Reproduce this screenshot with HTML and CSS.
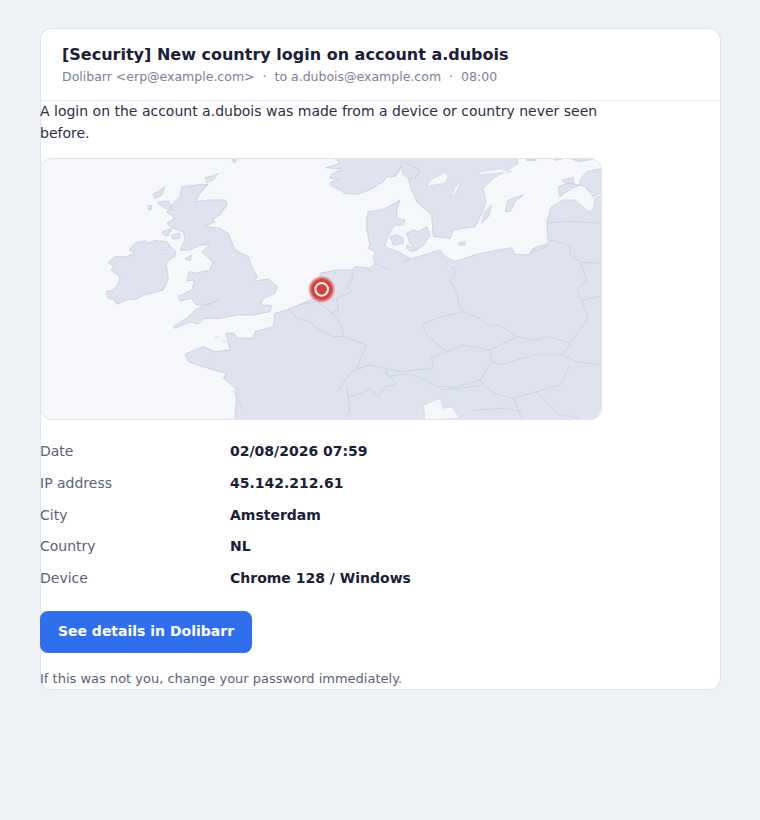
FILE: index.html
```html
<!DOCTYPE html>
<html lang="en">
<head>
<meta charset="utf-8">
<title>New country login</title>
<link rel="stylesheet" href="styles.css">
</head>
<body>
<main class="card">
  <header class="head">
    <h1 class="subject">[Security] New country login on account a.dubois</h1>
    <p class="meta"><span>Dolibarr &lt;erp@example.com&gt;</span><span class="dot">·</span><span>to a.dubois@example.com</span><span class="dot">·</span><span>08:00</span></p>
  </header>
  <p class="intro">A login on the account a.dubois was made from a device or country never seen before.</p>
  <div class="map">
    <svg class="map-svg" viewBox="3 12 1680 780" width="560" height="260" aria-hidden="true">
      <defs>
        <radialGradient id="halo">
          <stop offset="0" stop-color="#d8403a"/>
          <stop offset="0.72" stop-color="#d8403a"/>
          <stop offset="1" stop-color="#d8403a" stop-opacity="0.05"/>
        </radialGradient>
      </defs>
      <g class="land">
        <path d="M205 322L225 305 262 305 285 292 268 285 285 265 315 257 325 265 345 257 380 260 395 280 407 290 405 303 385 317 378 325 385 370 370 405 345 412 310 420 290 432 258 435 230 448 225 435 205 430 198 410 220 405 235 385 240 365 225 355 213 345 222 335Z"/>
        <path d="M425 95L505 87 480 115 465 140 510 135 555 135 562 147 540 180 515 195 525 200 495 215 540 220 565 235 585 285 625 305 635 335 652 365 645 378 685 372 712 395 705 415 670 430 660 450 695 452 690 470 640 480 590 480 540 490 495 490 475 508 450 500 405 520 400 515 440 490 465 465 495 450 535 435 505 450 470 450 455 430 420 438 415 425 455 405 465 375 440 378 447 350 470 355 510 345 518 320 485 290 510 270 480 270 450 285 420 285 435 255 430 230 400 220 380 205 405 190 380 170 395 150 420 125Z"/>
        <path d="M495 68L520 62 535 55 520 75 500 82Z"/>
        <path d="M340 118L375 95 365 120 345 130Z"/>
        <path d="M352 142L385 138 398 165 375 160Z"/>
        <path d="M324 152L335 152 333 165 324 163Z"/>
        <path d="M365 232L395 220 385 242 372 240Z"/>
        <path d="M395 240L420 235 420 250 397 252Z"/>
        <path d="M435 312L455 300 450 317Z"/>
        <path d="M575 14L590 14 584 24Z"/>
        <path d="M435 597L490 575 525 590 570 585 558 535 582 535 590 550 640 550 645 530 700 515 705 475 740 465 780 448 810 435 840 420 840 355 890 345 935 345 945 335 990 340 1005 325 1000 310 1005 290 985 280 990 270 980 220 980 190 985 170 1025 165 1055 150 1080 135 1070 165 1070 190 1095 195 1090 210 1065 210 1045 240 1035 270 1045 280 1075 290 1110 310 1090 320 1135 305 1185 290 1200 285 1215 305 1245 320 1320 295 1415 278 1425 298 1465 300 1480 280 1525 265 1520 200 1535 155 1570 135 1605 135 1645 170 1660 165 1665 130 1690 120 1690 800 585 800 590 705 575 690 550 670 560 655 520 645 445 620Z"/>
        <path d="M850 8L890 12 900 25 870 35 855 38 905 42 875 58 870 70 900 72 875 80 870 90 900 105 915 115 950 118 990 105 1030 80 1040 65 1065 65 1080 45 1083 30 1090 60 1105 70 1115 105 1130 140 1175 180 1180 245 1230 250 1240 225 1305 215 1330 165 1337 140 1330 100 1360 70 1435 25 1430 8Z"/>
        <path d="M1620 75L1640 50 1690 40 1690 110 1660 125 1635 95 1620 90Z"/>
        <path d="M1050 245L1070 240 1090 250 1090 265 1060 270Z"/>
        <path d="M1100 235L1120 225 1135 230 1160 215 1170 240 1150 270 1130 285 1110 265Z"/>
        <path d="M1100 270L1130 285 1115 290 1100 280Z"/>
        <path d="M1395 170L1405 135 1450 120 1425 140 1410 170Z"/>
        <path d="M1325 205L1335 170 1355 150 1345 185Z"/>
        <path d="M1255 265L1275 260 1275 270 1258 270Z"/>
        <path d="M1555 95L1585 85 1620 90 1595 100 1560 125 1555 110Z"/>
        <path d="M1565 75L1600 68 1600 85 1575 85Z"/>
        <path d="M1460 12L1490 15 1460 17Z"/>
        <path d="M1540 12L1565 12 1550 16Z"/>
        <path d="M1595 12L1620 20 1670 10Z"/>
      </g>
      <g class="sea">
        <path d="M362 285h8v10h-8z"/>
        <path d="M1160 95L1170 75 1215 52 1225 65 1215 85 1180 90Z"/>
        <path d="M1232 128L1245 95 1265 78 1250 110Z"/>
        <path d="M1150 750L1200 730 1210 760 1235 755 1260 790 1155 795Z"/>
        <path d="M1315 50L1380 42 1415 50 1370 55 1320 60Z"/>
        <path d="M1220 322l25 5 5 8-28-8z"/>
      </g>
      <g class="borders">
        <path d="M940 345L935 375 920 395 935 410 890 430 895 465 875 475 890 490 905 520 910 545 980 570 950 640 990 630 1080 650 1175 640 1180 620 1170 610 1220 590 1270 570 1350 585 1430 545 1480 555 1530 545 1590 565 1645 490 1625 435 1610 405 1640 375 1620 320 1590 300"/>
        <path d="M1240 335L1245 360 1230 375 1250 410 1255 440 1270 470 1320 490 1340 510 1380 510 1430 545"/>
        <path d="M1145 510L1190 490 1270 470"/>
        <path d="M1145 510L1165 545 1220 590"/>
        <path d="M1035 645L1045 665 1100 655 1145 670 1190 695 1250 695 1320 675 1355 620 1350 585"/>
        <path d="M1355 620L1380 630 1480 600 1565 600 1595 565"/>
        <path d="M1570 600L1610 620 1680 630"/>
        <path d="M1620 322L1680 325"/>
        <path d="M1625 435L1680 425"/>
        <path d="M1520 205L1580 198 1685 205"/>
        <path d="M1530 255L1590 270 1590 300"/>
        <path d="M1470 295L1525 272"/>
        <path d="M1320 675L1360 715 1420 730 1490 710 1560 690 1590 630"/>
        <path d="M1420 730L1445 790"/>
        <path d="M1490 710L1560 780 1620 790"/>
        <path d="M1205 705L1300 695 1330 690"/>
        <path d="M1300 765L1400 760 1445 770"/>
        <path d="M890 710L935 650 990 630"/>
        <path d="M920 700L925 725 970 715 990 700 1015 725 1035 695 1070 690 1035 645"/>
        <path d="M925 725L930 770 915 790"/>
        <path d="M745 460L770 490 810 500 835 525 880 545 910 545"/>
        <path d="M780 448L800 445 830 440 860 460 875 475"/>
        <path d="M1005 325L1050 345"/>
        <path d="M1090 20L1140 45 1125 70 1105 70"/>
        <path d="M580 705L610 765"/>
        <path d="M525 548l10-3M548 558l8 0"/>
      </g>
      <circle class="halo" cx="845" cy="403" r="41" fill="url(#halo)"/>
      <circle class="pin" cx="845" cy="403" r="19"/>
    </svg>
  </div>
  <dl class="facts">
    <div class="fact"><dt>Date</dt><dd>02/08/2026 07:59</dd></div>
    <div class="fact"><dt>IP address</dt><dd>45.142.212.61</dd></div>
    <div class="fact"><dt>City</dt><dd>Amsterdam</dd></div>
    <div class="fact"><dt>Country</dt><dd>NL</dd></div>
    <div class="fact"><dt>Device</dt><dd>Chrome 128 / Windows</dd></div>
  </dl>
  <a class="cta" href="#">See details in Dolibarr</a>
  <p class="note">If this was not you, change your password immediately.</p>
</main>
</body>
</html>
```
FILE: styles.css
```css
* { box-sizing: border-box; }
html, body { margin: 0; }
body {
  background: #eef1f6;
  padding: 28px 39px 0 40px;
  font-family: "DejaVu Sans", sans-serif;
  color: #1a2038;
}
.card {
  width: 681px;
  height: 662px;
  background: #fff;
  border-radius: 12px;
  box-shadow: inset 0 0 0 1px #dfe3ec;
  overflow: hidden;
}
.head {
  padding: 17px 22px 0;
  border-bottom: 1px solid #e6e9f1;
  height: 73px;
}
.subject {
  margin: 0;
  font-size: 16px;
  line-height: 20px;
  font-weight: 700;
}
.meta {
  margin: 4px 0 0;
  font-size: 12.5px;
  line-height: 16px;
  color: #7a8196;
  display: flex;
}
.dot { margin: 0 8px; }
.intro {
  margin: 0;
  width: 562px;
  font-size: 14px;
  line-height: 21.7px;
  color: #2a3044;
}
.map {
  margin-top: 13.6px;
  width: 562px;
  height: 262px;
  border: 1px solid #dfe3ec;
  border-radius: 12px;
  background: #f5f7fb;
  overflow: hidden;
}
.map-svg { display: block; }
.land path { fill: #dfe3ef; stroke: #cdd3e4; stroke-width: 3; stroke-linejoin: round; }
.sea path { fill: #f5f7fb; stroke: #cdd3e4; stroke-width: 2; }
.borders path { fill: none; stroke: #cdd3e4; stroke-width: 3; stroke-linejoin: round; }
.pin { fill: #d8403a; stroke: #fff; stroke-width: 6; }
.facts { margin: 15.3px 0 0; }
.fact { display: flex; height: 31.75px; align-items: center; font-size: 14px; }
.fact dt { width: 190px; color: #5b6278; }
.fact dd { margin: 0; font-weight: 700; color: #1a2038; }
.cta {
  display: block;
  width: 212px;
  height: 42px;
  margin-top: 16.95px;
  background: #2f6fed;
  border-radius: 8px;
  color: #fff;
  font-size: 14px;
  font-weight: 700;
  line-height: 40px;
  text-align: center;
  text-decoration: none;
}
.note {
  margin: 18px 0 0;
  font-size: 13px;
  line-height: 16px;
  color: #5b6278;
}
```
